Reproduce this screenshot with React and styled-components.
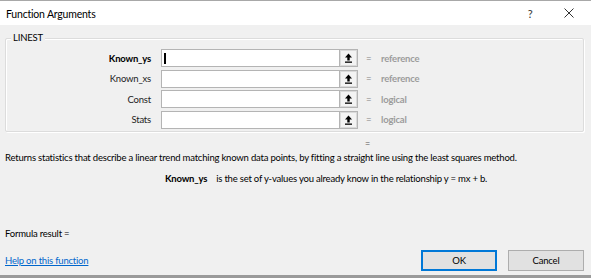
import React from 'react'
import styled, {createGlobalStyle} from 'styled-components'

const GlobalStyle = createGlobalStyle`
html,body{margin:0;padding:0;background:#f0f0f0;}
body{font-family:Lato,"Open Sans",sans-serif;font-size:9.5px;letter-spacing:-0.2px;color:#000;}
`

const args = [
    {name:"Known_ys", value:"reference", active:true},
    {name:"Known_xs", value:"reference"},
    {name:"Const", value:"logical"},
    {name:"Stats", value:"logical"},
]

const UploadIcon = () =>(
    <svg width="9" height="10" viewBox="0 0 9 10">
        <path d="M4.5 0.5 L8 4.5 L5.7 4.5 L5.7 7.5 L3.3 7.5 L3.3 4.5 L1 4.5 Z" fill="#000"/>
        <rect x="1" y="8.5" width="7" height="1.3" fill="#000"/>
    </svg>
)

export default function App(){
    return(
        <Dialog>
            <GlobalStyle/>
            <TopEdge/>
            <TitleBar>
                <Title>Function Arguments</Title>
                <TitleButtons>
                    <Help>?</Help>
                    <Close>
                        <svg width="10" height="10" viewBox="0 0 10 10">
                            <path d="M0.5 0.5 L9.5 9.5 M9.5 0.5 L0.5 9.5" stroke="#333" strokeWidth="1"/>
                        </svg>
                    </Close>
                </TitleButtons>
            </TitleBar>
            <Body>
                <Group>
                    <Legend>LINEST</Legend>
                    {args.map(a =>(
                        <ArgRow key={a.name}>
                            <ArgLabel bold={a.active}>{a.name}</ArgLabel>
                            <InputBox>
                                {a.active ? <Caret/> : null}
                            </InputBox>
                            <RefButton><UploadIcon/></RefButton>
                            <Equals>=</Equals>
                            <ArgValue>{a.value}</ArgValue>
                        </ArgRow>
                    ))}
                </Group>
                <ResultEq>=</ResultEq>
                <Description>Returns statistics that describe a linear trend matching known data points, by fitting a straight line using the least squares method.</Description>
                <ArgHelp>
                    <ArgHelpName>Known_ys</ArgHelpName>
                    <span>is the set of y-values you already know in the relationship y = mx + b.</span>
                </ArgHelp>
                <Spacer/>
                <FormulaResult>Formula result =</FormulaResult>
                <Footer>
                    <HelpLink href="#">Help on this function</HelpLink>
                    <Buttons>
                        <Btn primary>OK</Btn>
                        <Btn>Cancel</Btn>
                    </Buttons>
                </Footer>
            </Body>
            <BottomEdge/>
        </Dialog>
    )
}

const Dialog = styled.div`
width:591px;
height:278px;
display:flex;
flex-direction:column;
background:#f0f0f0;
overflow:hidden;
`
const TopEdge = styled.div`
height:1px;
background:#a8a8a8;
`
const BottomEdge = styled.div`
height:3px;
background:#9a9a9a;
`
const TitleBar = styled.div`
height:24px;
background:#fff;
display:flex;
align-items:center;
justify-content:space-between;
padding-left:6px;
`
const Title = styled.div`
font-size:10.5px;
color:#000;
margin-top:1px;
`
const TitleButtons = styled.div`
display:flex;
align-items:center;
height:100%;
`
const Help = styled.div`
width:34px;
text-align:center;
font-size:11px;
color:#333;
`
const Close = styled.div`
width:44px;
display:flex;
justify-content:center;
`
const Body = styled.div`
flex:1;
display:flex;
flex-direction:column;
padding:0 7px 0 5px;
`
const Group = styled.div`
position:relative;
margin-top:13px;
border:1px solid #dcdcdc;
border-radius:2px;
box-shadow:inset 1px 1px 0 #fff, 1px 1px 0 #fff;
padding:10px 0 2px 0;
display:flex;
flex-direction:column;
gap:2.5px;
`
const Legend = styled.div`
position:absolute;
top:-8px;
left:5px;
padding:0 2px;
background:#f0f0f0;
line-height:14px;
`
const ArgRow = styled.div`
display:flex;
align-items:center;
height:18px;
`
const ArgLabel = styled.div`
width:145px;
text-align:right;
padding-right:10px;
font-weight:${p => p.bold ? 700 : 400};
color:${p => p.bold ? '#000' : '#222'};
`
const InputBox = styled.div`
width:175px;
height:16px;
background:#fff;
border:1px solid #b4b4b4;
display:flex;
align-items:center;
padding-left:2px;
`
const Caret = styled.div`
width:2px;
height:11px;
background:#000;
`
const RefButton = styled.div`
width:17px;
height:16px;
border:1px solid #b4b4b4;
border-left:none;
background:#f3f3f3;
box-shadow:inset 0 0 0 1px #dadada;
display:flex;
align-items:center;
justify-content:center;
`
const Equals = styled.div`
margin-left:8px;
width:15px;
color:#808080;
`
const ArgValue = styled.div`
color:#9c9c9c;
font-weight:700;
`
const ResultEq = styled.div`
margin-top:6px;
padding-left:360px;
color:#555;
font-size:9px;
line-height:12px;
`
const Description = styled.div`
margin-top:1px;
line-height:14px;
`
const ArgHelp = styled.div`
margin-top:7.5px;
padding-left:160px;
display:flex;
gap:9px;
line-height:14px;
`
const ArgHelpName = styled.span`
font-weight:700;
`
const Spacer = styled.div`
flex:1;
`
const FormulaResult = styled.div`
line-height:14px;
margin-bottom:9px;
`
const Footer = styled.div`
display:flex;
align-items:center;
justify-content:space-between;
margin-bottom:4px;
`
const HelpLink = styled.a`
color:#0066cc;
text-decoration:underline;
`
const Buttons = styled.div`
display:flex;
gap:11px;
`
const Btn = styled.button`
width:76px;
height:21px;
font-family:inherit;
font-size:9.5px;
letter-spacing:-0.2px;
color:#000;
background:#e1e1e1;
border:1px solid ${p => p.primary ? '#0078d7' : '#adadad'};
box-shadow:${p => p.primary ? 'inset 0 0 0 1px #0078d7' : 'none'};
padding:0;
`
